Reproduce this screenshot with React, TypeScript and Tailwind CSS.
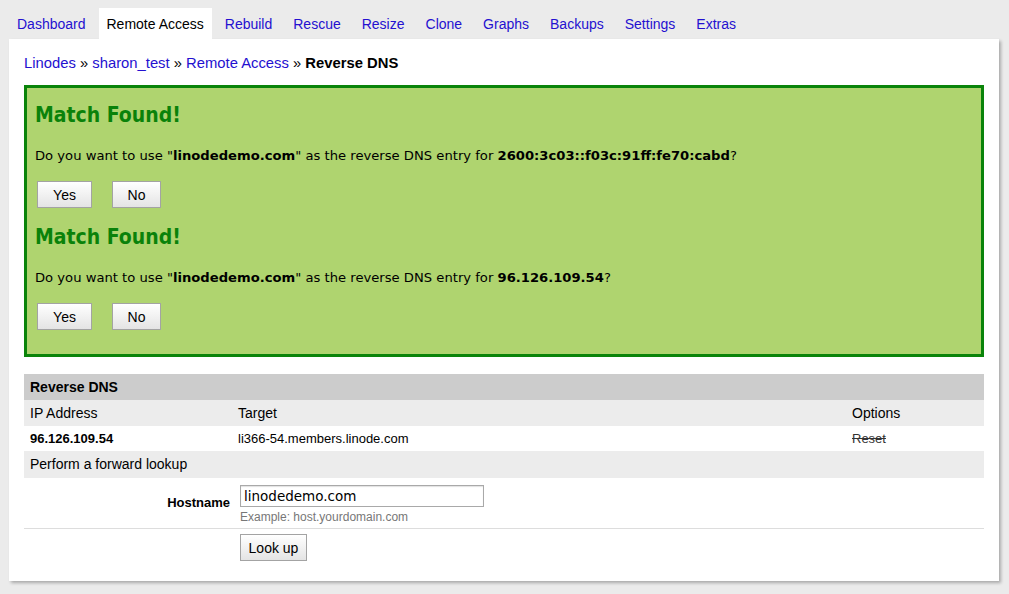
const tabs = ['Dashboard', 'Remote Access', 'Rebuild', 'Rescue', 'Resize', 'Clone', 'Graphs', 'Backups', 'Settings', 'Extras']

function GrayButton({label, className = ''}: {label: string; className?: string}) {
  return (
    <button
      type="button"
      className={`h-[27px] border border-[#a3a3a3] bg-gradient-to-b from-white to-[#e4e4e4] font-['Liberation_Sans',Arial,sans-serif] text-[14px] leading-none text-black ${className}`}
    >
      {label}
    </button>
  )
}

function MatchBlock({ip}: {ip: string}) {
  return (
    <div>
      <h2 className="h-[26px] font-['DejaVu_Sans_Condensed','DejaVu_Sans',sans-serif] text-[21px] font-bold leading-[26px] text-[#0a820a]">
        Match Found!
      </h2>
      <p className="mt-[20px] font-['DejaVu_Sans',Verdana,sans-serif] text-[13.15px] leading-[16px] text-black">
        Do you want to use "<b>linodedemo.com</b>" as the reverse DNS entry for <b>{ip}</b>?
      </p>
      <div className="mt-[17px] flex gap-[20px] pl-[2px]">
        <GrayButton label="Yes" className="w-[55px]" />
        <GrayButton label="No" className="w-[49px]" />
      </div>
    </div>
  )
}

export default function App() {
  return (
    <div className="min-h-screen bg-[#ebebeb] px-[9px] pt-[8px] font-['Liberation_Sans',Arial,sans-serif]">
      {/* tab strip */}
      <nav className="flex gap-[5px] text-[14px]">
        {tabs.map((t) =>
          t === 'Remote Access' ? (
            <span key={t} className="flex h-[31px] items-center bg-white px-2 pt-[2px] text-black">
              {t}
            </span>
          ) : (
            <span key={t} className="flex h-[31px] items-center px-2 pt-[2px] text-[#2410d0]">
              {t}
            </span>
          ),
        )}
      </nav>

      {/* main panel */}
      <div className="w-[990px] bg-white px-[15px] pb-[14px] pt-[15px] shadow-[2px_2px_3px_rgba(0,0,0,0.28)]">
        <div className="h-[18px] text-[14.8px] leading-[18px] text-black">
          <span className="text-[#2410d0]">Linodes</span> » <span className="text-[#2410d0]">sharon_test</span> »{' '}
          <span className="text-[#2410d0]">Remote Access</span> » <b>Reverse DNS</b>
        </div>

        <div className="mt-[13px] border-[3px] border-[#0a840a] bg-[#afd46f] pb-[24px] pl-[8px] pt-[14px]">
          <MatchBlock ip="2600:3c03::f03c:91ff:fe70:cabd" />
          <div className="mt-[16px]">
            <MatchBlock ip="96.126.109.54" />
          </div>
        </div>

        {/* reverse dns table */}
        <div className="mt-[17px]">
          <div className="flex h-[26px] items-center bg-[#cccccc] px-[6px] text-[14px] font-bold text-black">Reverse DNS</div>
          <div className="grid h-[26px] grid-cols-[208px_614px_1fr] items-center bg-[#ececec] text-[14px] text-black">
            <span className="pl-[6px]">IP Address</span>
            <span className="pl-[6px]">Target</span>
            <span className="pl-[6px]">Options</span>
          </div>
          <div className="grid h-[25px] grid-cols-[208px_614px_1fr] items-center bg-white text-[13px] text-black">
            <span className="pl-[6px] font-bold">96.126.109.54</span>
            <span className="pl-[6px]">li366-54.members.linode.com</span>
            <span className="pl-[6px] text-[#333] line-through">Reset</span>
          </div>
          <div className="flex h-[27px] items-center bg-[#ececec] px-[6px] text-[14px] text-black">Perform a forward lookup</div>

          <div className="grid h-[51px] grid-cols-[206px_1fr] items-center gap-x-[10px] border-b border-[#dddddd]">
            <span className="text-right text-[13px] font-bold text-black">Hostname</span>
            <div className="flex flex-col pt-[2px]">
              <input
                readOnly
                value="linodedemo.com"
                className="h-[22px] w-[244px] border border-[#a9a9a9] pl-[3px] font-['DejaVu_Sans',Verdana,sans-serif] text-[13.5px] text-black shadow-[inset_0_1px_1px_rgba(0,0,0,0.12)] outline-none"
              />
              <span className="mt-[3px] h-[14px] text-[12px] leading-[14px] text-[#777]">Example: host.yourdomain.com</span>
            </div>
          </div>

          <div className="grid grid-cols-[206px_1fr] gap-x-[10px] pt-[5px] pb-[6px]">
            <span />
            <div>
              <GrayButton label="Look up" className="w-[67px] text-[14.5px]" />
            </div>
          </div>
        </div>
      </div>
    </div>
  )
}
